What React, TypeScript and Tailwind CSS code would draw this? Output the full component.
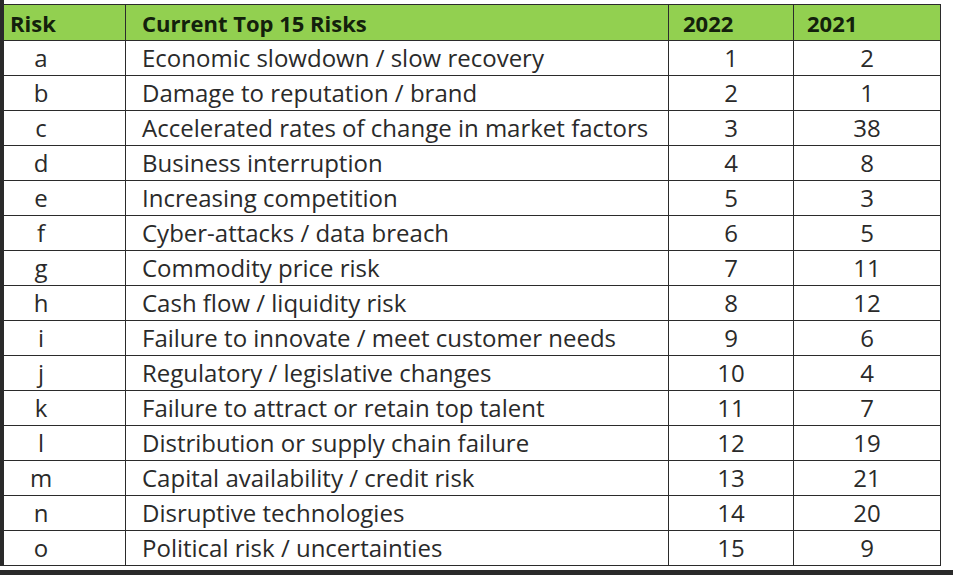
const risks = [
  { id: "a", name: "Economic slowdown / slow recovery", y22: 1, y21: 2 },
  { id: "b", name: "Damage to reputation / brand", y22: 2, y21: 1 },
  { id: "c", name: "Accelerated rates of change in market factors", y22: 3, y21: 38 },
  { id: "d", name: "Business interruption", y22: 4, y21: 8 },
  { id: "e", name: "Increasing competition", y22: 5, y21: 3 },
  { id: "f", name: "Cyber-attacks / data breach", y22: 6, y21: 5 },
  { id: "g", name: "Commodity price risk", y22: 7, y21: 11 },
  { id: "h", name: "Cash flow / liquidity risk", y22: 8, y21: 12 },
  { id: "i", name: "Failure to innovate / meet customer needs", y22: 9, y21: 6 },
  { id: "j", name: "Regulatory / legislative changes", y22: 10, y21: 4 },
  { id: "k", name: "Failure to attract or retain top talent", y22: 11, y21: 7 },
  { id: "l", name: "Distribution or supply chain failure", y22: 12, y21: 19 },
  { id: "m", name: "Capital availability / credit risk", y22: 13, y21: 21 },
  { id: "n", name: "Disruptive technologies", y22: 14, y21: 20 },
  { id: "o", name: "Political risk / uncertainties", y22: 15, y21: 9 },
];

const cols = "grid grid-cols-[122px_543px_125px_146px]";

export default function App() {
  return (
    <div
      className="w-[953px] h-[575px] bg-white flex flex-col overflow-hidden"
      style={{ fontFamily: "'Open Sans', sans-serif" }}
    >
      <div className="flex flex-1">
        {/* left frame edge */}
        <div className="w-[4px] bg-[#2a2a2a]" />

        <div className="pt-[4px]">
          <div className="border-t border-r border-[#2b2b2b]">
            {/* header */}
            <div className={`${cols} h-[36px] bg-[#92d050] border-b border-[#2b2b2b] text-[22px] font-bold text-[#13200c] leading-none`}>
              <div className="border-r border-[#2b2b2b] pl-[6px] flex items-center">Risk</div>
              <div className="border-r border-[#2b2b2b] pl-[16px] flex items-center">Current Top 15 Risks</div>
              <div className="border-r border-[#2b2b2b] pl-[14px] flex items-center">2022</div>
              <div className="pl-[13px] flex items-center">2021</div>
            </div>

            {risks.map((r) => (
              <div
                key={r.id}
                className={`${cols} h-[35px] border-b border-[#2b2b2b] text-[24px] leading-none text-[#2a2a2a]`}
              >
                <div className="border-r border-[#2b2b2b] flex items-center">
                  <span className="ml-[24px] w-[26px] text-center">{r.id}</span>
                </div>
                <div className="border-r border-[#2b2b2b] pl-[16px] flex items-center">{r.name}</div>
                <div className="border-r border-[#2b2b2b] flex items-center justify-center">{r.y22}</div>
                <div className="flex items-center justify-center">{r.y21}</div>
              </div>
            ))}
          </div>
        </div>
      </div>

      {/* bottom frame edge */}
      <div className="h-[4px] bg-white" />
      <div className="h-[6px] bg-[#2a2a2a]" />
    </div>
  );
}
